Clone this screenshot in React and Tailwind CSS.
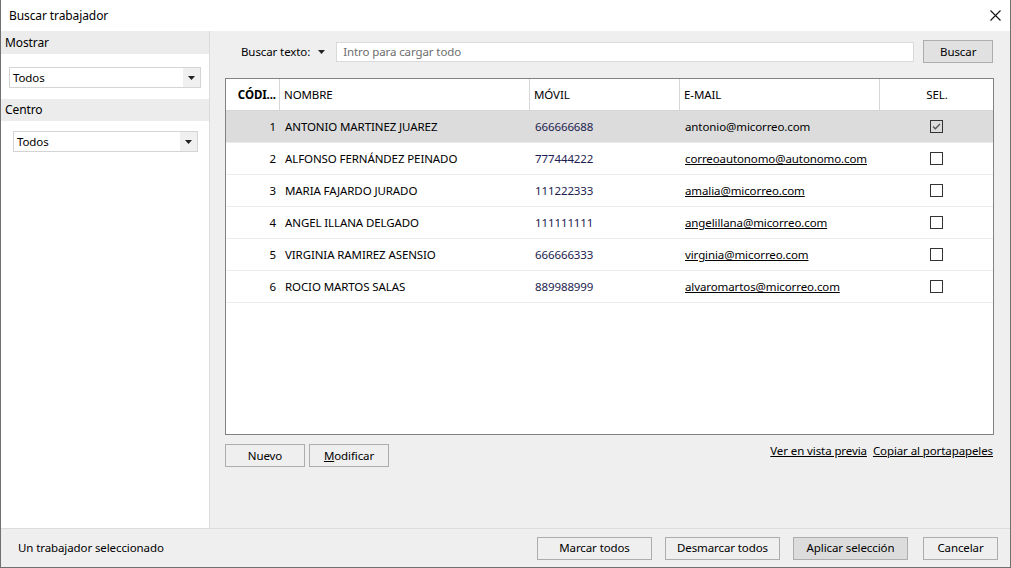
import React from "react";

const rows = [
  { id: 1, name: "ANTONIO MARTINEZ JUAREZ", phone: "666666688", email: "antonio@micorreo.com", sel: true },
  { id: 2, name: "ALFONSO FERNÁNDEZ PEINADO", phone: "777444222", email: "correoautonomo@autonomo.com" },
  { id: 3, name: "MARIA FAJARDO JURADO", phone: "111222333", email: "amalia@micorreo.com" },
  { id: 4, name: "ANGEL ILLANA DELGADO", phone: "111111111", email: "angelillana@micorreo.com" },
  { id: 5, name: "VIRGINIA RAMIREZ ASENSIO", phone: "666666333", email: "virginia@micorreo.com" },
  { id: 6, name: "ROCIO MARTOS SALAS", phone: "889988999", email: "alvaromartos@micorreo.com" },
];

function Caret() {
  return (
    <svg width="7" height="4" viewBox="0 0 7 4"><path d="M0 0h7L3.5 4z" fill="#222" /></svg>
  );
}

function Select({ className }) {
  return (
    <div className={"flex h-[21px] items-center border border-[#d4d4d4] bg-white " + className}>
      <span className="flex-1 pl-[3px] text-black">Todos</span>
      <span className="flex h-full w-[17px] items-center justify-center bg-[#f0f0f0]"><Caret /></span>
    </div>
  );
}

function Btn({ children, className = "" }) {
  return (
    <div className={"flex h-[23px] shrink-0 items-center justify-center whitespace-nowrap border border-[#adadad] text-black " + className}>
      {children}
    </div>
  );
}

function Check({ on }) {
  return (
    <div className="flex h-[13px] w-[13px] items-center justify-center border border-[#333] bg-transparent">
      {on && (
        <svg width="9" height="7" viewBox="0 0 9 7"><path d="M1 3.5l2.3 2.3L8 1" stroke="#555" strokeWidth="1.3" fill="none" /></svg>
      )}
    </div>
  );
}

export default function App() {
  return (
    <div
      className="flex h-[568px] w-[1011px] flex-col overflow-hidden border border-t-0 border-[#707070] bg-white text-[11.5px] tracking-[-0.1px] text-black"
      style={{ fontFamily: '"Noto Sans", "Open Sans", sans-serif' }}
    >
      {/* title bar */}
      <div className="flex h-[31px] shrink-0 items-center justify-between bg-white pl-[8px] pr-[9px]">
        <span className="text-[12px]">Buscar trabajador</span>
        <svg width="11" height="11" viewBox="0 0 11 11"><path d="M0.5 0.5l10 10M10.5 0.5l-10 10" stroke="#111" strokeWidth="1.1" /></svg>
      </div>
      <div className="flex min-h-0 flex-1">
        {/* left */}
        <div className="flex w-[209px] shrink-0 flex-col border-r border-[#dcdcdc] bg-white">
          <div className="flex h-[23px] items-center bg-[#ececec] pl-[4px] text-[12px]">Mostrar</div>
          <div className="px-[8px] pt-[13px] pb-[11px]">
            <Select className="w-[192px]" />
          </div>
          <div className="flex h-[22px] items-center bg-[#ececec] pl-[4px] text-[12px]">Centro</div>
          <div className="pl-[12px] pt-[10px]">
            <Select className="w-[185px]" />
          </div>
        </div>
        {/* right */}
        <div className="flex flex-1 flex-col bg-[#efefef] pl-[15px] pr-[17px]">
          <div className="mt-[10px] flex h-[21px] items-center">
            <span className="ml-[16px] whitespace-nowrap">Buscar texto:</span>
            <span className="ml-[8px] flex items-center"><Caret /></span>
            <div className="ml-[11px] flex h-[20px] w-[578px] shrink-0 items-center border border-[#d9d9d9] bg-white pl-[6px] text-[#6d6d6d]">
              Intro para cargar todo
            </div>
            <Btn className="ml-[9px] h-[20px] w-[70px] bg-[#e1e1e1]">Buscar</Btn>
          </div>
          {/* table */}
          <div className="mt-[16px] h-[357px] w-[769px] border border-[#828282] bg-white">
            <div className="flex h-[32px] border-b border-[#d6d6d6]">
              <div className="flex w-[54px] items-center justify-end border-r border-[#d6d6d6] pr-[3px] font-bold">CÓDI...</div>
              <div className="flex w-[250px] items-center border-r border-[#d6d6d6] pl-[4px]">NOMBRE</div>
              <div className="flex w-[150px] items-center border-r border-[#d6d6d6] pl-[4px]">MÓVIL</div>
              <div className="flex w-[200px] items-center border-r border-[#d6d6d6] pl-[4px]">E-MAIL</div>
              <div className="flex flex-1 items-center justify-center pl-[1px]">SEL.</div>
            </div>
            {rows.map((r) => (
              <div
                key={r.id}
                className={"flex h-[32px] border-b border-[#ececec] " + (r.sel ? "bg-[#dcdcdc]" : "bg-white")}
              >
                <div className="flex w-[54px] items-center justify-end pr-[4px]">{r.id}</div>
                <div className="flex w-[250px] items-center pl-[5px]">{r.name}</div>
                <div className="flex w-[150px] items-center pl-[5px] text-[#1c1c50]">{r.phone}</div>
                <div className="flex w-[200px] items-center pl-[5px]">
                  <span className={r.sel ? "" : "underline"}>{r.email}</span>
                </div>
                <div className="flex flex-1 items-center justify-center pr-[1px]">
                  <Check on={r.sel} />
                </div>
              </div>
            ))}
          </div>
          <div className="mt-[9px] flex items-start">
            <Btn className="w-[80px] bg-[#efefef]">Nuevo</Btn>
            <Btn className="ml-[4px] w-[80px] bg-[#efefef]">
              <span><span className="underline">M</span>odificar</span>
            </Btn>
            <div className="ml-auto mt-[-2px] flex gap-[6px] pr-[1px]">
              <span className="underline">Ver en vista previa</span>
              <span className="underline">Copiar al portapapeles</span>
            </div>
          </div>
        </div>
      </div>
      {/* footer */}
      <div className="flex h-[39px] shrink-0 items-center border-t border-[#dcdcdc] bg-[#efefef] pl-[17px] pr-[12px]">
        <span>Un trabajador seleccionado</span>
        <div className="ml-auto flex items-center">
          <Btn className="w-[115px] bg-[#efefef]">Marcar todos</Btn>
          <Btn className="ml-[13px] w-[115px] bg-[#efefef]">Desmarcar todos</Btn>
          <Btn className="ml-[13px] w-[115px] bg-[#dcdcdc]">Aplicar selección</Btn>
          <Btn className="ml-[15px] w-[75px] bg-[#efefef]">Cancelar</Btn>
        </div>
      </div>
    </div>
  );
}
